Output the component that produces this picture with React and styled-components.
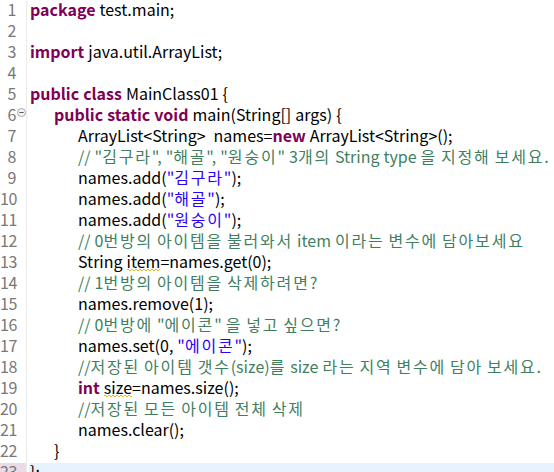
import React from "react";
import styled, { createGlobalStyle } from "styled-components";

const Global = createGlobalStyle`
  html, body { margin: 0; padding: 0; background: #ffffff; }
  body { overflow: hidden; }
`;

const Editor = styled.div`
  width: 554px;
  height: 472px;
  overflow: hidden;
  background: #ffffff;
  display: flex;
  flex-direction: column;
  padding-top: 1px;
  box-sizing: border-box;
  font-family: "Noto Sans CJK KR", "Noto Sans", sans-serif;
  font-size: 16px;
`;

const Line = styled.div`
  display: flex;
  height: 21px;
  flex: 0 0 21px;
`;

const Gutter = styled.div`
  width: 27px;
  flex: 0 0 27px;
  box-sizing: border-box;
  text-align: right;
  padding-right: 10px;
  padding-bottom: 5px;
  line-height: 16px;
  position: relative;
  color: #787878;
  background: ${(p) => (p.$current ? "#eadbe9" : "#ffffff")};
  border-right: 1px solid #ececec;
  letter-spacing: -0.3px;
`;

const Fold = styled.svg`
  position: absolute;
  right: 0;
  top: 2px;
`;

const Code = styled.div`
  flex: 1;
  margin-left: 2px;
  padding-left: ${(p) => 1 + p.$indent * 24}px;
  padding-bottom: 5px;
  line-height: 16px;
  white-space: pre;
  word-spacing: 0.4px;
  color: #000000;
  background: ${(p) => (p.$current ? "#e8f2fe" : "transparent")};
`;

const Kw = styled.span`
  color: #7f0055;
  font-weight: bold;
`;
const Str = styled.span`
  color: #2a00ff;
`;
const Cmt = styled.span`
  color: #3f7f5f;
`;
const Warn = styled.span`
  position: relative;
  &::after {
    content: "";
    position: absolute;
    left: 0;
    right: 0;
    bottom: 2px;
    height: 2px;
    background:
      linear-gradient(90deg, #e2bb28 50%, transparent 50%) 0 0 / 4px 1px repeat-x,
      linear-gradient(90deg, transparent 50%, #e2bb28 50%) 0 1px / 4px 1px repeat-x;
  }
`;
const Ko = styled.span`
  letter-spacing: 1.8px;
`;

// wrap Hangul runs so they get Malgun-like advance widths
const ko = (s) =>
  s.split(/([\uac00-\ud7a3]+)/).map((part, i) =>
    /[\uac00-\ud7a3]/.test(part) ? <Ko key={i}>{part}</Ko> : part
  );

const lines = [
  [0, <><Kw>package</Kw> test.main;</>],
  [0, null],
  [0, <><Kw>import</Kw> java.util.ArrayList;</>],
  [0, null],
  [0, <><Kw>public</Kw> <Kw>class</Kw> MainClass01 {"{"}</>],
  [1, <><Kw>public</Kw> <Kw>static</Kw> <Kw>void</Kw> main(String[] args) {"{"}</>, true],
  [2, <>ArrayList&lt;String&gt;  names=<Kw>new</Kw> ArrayList&lt;String&gt;();</>],
  [2, <Cmt>{ko('// "김구라", "해골", "원숭이" 3개의 String type 을 지정해 보세요.')}</Cmt>],
  [2, <>names.add(<Str>{ko('"김구라"')}</Str>);</>],
  [2, <>names.add(<Str>{ko('"해골"')}</Str>);</>],
  [2, <>names.add(<Str>{ko('"원숭이"')}</Str>);</>],
  [2, <Cmt>{ko("// 0번방의 아이템을 불러와서 item 이라는 변수에 담아보세요")}</Cmt>],
  [2, <>String <Warn>item</Warn>=names.get(0);</>],
  [2, <Cmt>{ko("// 1번방의 아이템을 삭제하려면?")}</Cmt>],
  [2, <>names.remove(1);</>],
  [2, <Cmt>{ko('// 0번방에 "에이콘" 을 넣고 싶으면?')}</Cmt>],
  [2, <>names.set(0, <Str>{ko('"에이콘"')}</Str>);</>],
  [2, <Cmt>{ko("//저장된 아이템 갯수(size)를 size 라는 지역 변수에 담아 보세요.")}</Cmt>],
  [2, <><Kw>int</Kw> <Warn>size</Warn>=names.size();</>],
  [2, <Cmt>{ko("//저장된 모든 아이템 전체 삭제")}</Cmt>],
  [2, <>names.clear();</>],
  [1, <>{"}"}</>],
  [0, <>{"};"}</>, false, true],
];

export default function App() {
  return (
    <>
      <Global />
      <Editor>
        {lines.map(([indent, content, fold, current], i) => (
          <Line key={i}>
            <Gutter $current={current}>
              {i + 1}
              {fold && (
                <Fold width="9" height="9" viewBox="0 0 9 9">
                  <circle cx="4.5" cy="4.5" r="4" fill="#f4f4f4" stroke="#a8a8a8" strokeWidth="1" />
                  <line x1="2.3" y1="4.5" x2="6.7" y2="4.5" stroke="#5a5a5a" strokeWidth="1" />
                </Fold>
              )}
            </Gutter>
            <Code $indent={indent} $current={current}>
              {content}
            </Code>
          </Line>
        ))}
      </Editor>
    </>
  );
}
